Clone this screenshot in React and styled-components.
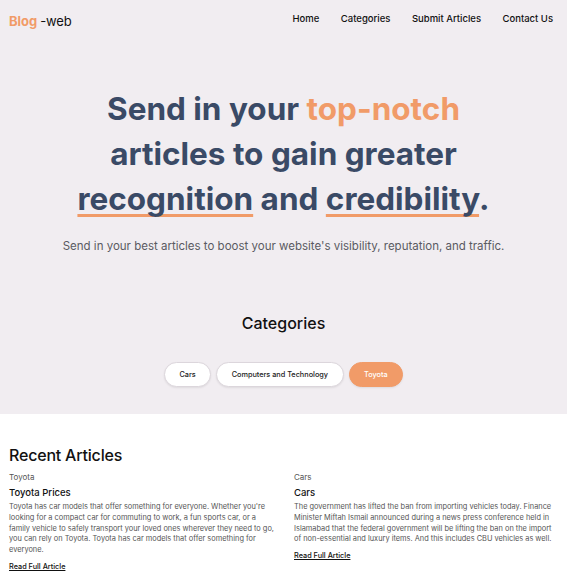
import styled, { createGlobalStyle } from 'styled-components';

const GlobalStyle = createGlobalStyle`
  html, body {
    margin: 0;
    padding: 0;
    background: #ffffff;
  }
  body {
    font-family: Inter, "Open Sans", sans-serif;
    color: #111;
  }
  * { box-sizing: border-box; }
`;

const orange = '#f19b68';

const Top = styled.div`
  background: #f1edf1;
  padding-bottom: 27px;
`;

const Header = styled.header`
  height: 38px;
  display: flex;
  align-items: center;
  justify-content: space-between;
  padding: 0 14px 0 9px;
`;

const Logo = styled.div`
  font-size: 13px;
  letter-spacing: -0.2px;
  margin-top: 4px;
  span { color: ${orange}; font-weight: 700; margin-right: 3px; letter-spacing: 0; }
`;

const Nav = styled.nav`
  display: flex;
  gap: 21.5px;
  margin-top: -2px;
`;

const NavLink = styled.a`
  font-size: 9.5px;
  font-weight: 500;
  color: #111;
  text-decoration: none;
`;

const Hero = styled.section`
  text-align: center;
  padding-top: 48px;
`;

const Title = styled.h1`
  margin: 0;
  font-size: 31.5px;
  line-height: 45px;
  font-weight: 700;
  color: #3a4a66;
`;

const Accent = styled.span`
  color: ${orange};
`;

const Marked = styled.span`
  text-decoration: underline;
  text-decoration-color: ${orange};
  text-decoration-thickness: 3px;
  text-underline-offset: 4px;
  text-decoration-skip-ink: none;
`;

const Lead = styled.p`
  margin: 18px 0 0;
  font-size: 11.5px;
  color: #5a5a62;
`;

const CatSection = styled.section`
  margin-top: 60px;
  text-align: center;
`;

const CatHeading = styled.h2`
  margin: 0;
  font-size: 16px;
  font-weight: 500;
  color: #111;
`;

const Pills = styled.div`
  display: flex;
  justify-content: center;
  gap: 5px;
  margin-top: 29px;
`;

const Pill = styled.button`
  height: 25px;
  padding: 0 14.5px;
  border-radius: 13px;
  border: 1px solid ${p => (p.$active ? orange : '#dcd6dc')};
  background: ${p => (p.$active ? orange : '#ffffff')};
  color: ${p => (p.$active ? '#ffffff' : '#222')};
  font-family: inherit;
  font-size: 7.3px;
  font-weight: 500;
  box-shadow: 0 1px 2px rgba(0, 0, 0, 0.08);
`;

const Articles = styled.section`
  padding: 31px 9px 0;
`;

const ArticlesHeading = styled.h2`
  margin: 0;
  font-size: 16px;
  letter-spacing: -0.2px;
  font-weight: 500;
  color: #111;
`;

const Grid = styled.div`
  display: grid;
  grid-template-columns: 270px 1fr;
  column-gap: 15px;
  margin-top: 7px;
`;

const Card = styled.article``;

const Tag = styled.div`
  font-size: 8px;
  color: #555;
`;

const CardTitle = styled.h3`
  margin: 5px 0 0;
  font-size: 9.5px;
  font-weight: 500;
  color: #111;
`;

const Body = styled.p`
  margin: 4px 0 0;
  font-size: 7.4px;
  line-height: 10.8px;
  color: #555;
`;

const ReadMore = styled.a`
  display: block;
  width: fit-content;
  margin-top: 6px;
  font-size: 7.3px;
  font-weight: 500;
  color: #111;
  text-decoration: underline;
`;

const articles = [
  {
    tag: 'Toyota',
    title: 'Toyota Prices',
    body:
      "Toyota has car models that offer something for everyone. Whether you're looking for a compact car for commuting to work, a fun sports car, or a family vehicle to safely transport your loved ones wherever they need to go, you can rely on Toyota. Toyota has car models that offer something for everyone.",
  },
  {
    tag: 'Cars',
    title: 'Cars',
    body:
      'The government has lifted the ban from importing vehicles today. Finance Minister Miftah Ismail announced during a news press conference held in Islamabad that the federal government will be lifting the ban on the import of non-essential and luxury items. And this includes CBU vehicles as well.',
  },
];

export default function App() {
  return (
    <>
      <GlobalStyle />
      <Top>
        <Header>
          <Logo><span>Blog</span>-web</Logo>
          <Nav>
            <NavLink>Home</NavLink>
            <NavLink>Categories</NavLink>
            <NavLink>Submit Articles</NavLink>
            <NavLink>Contact Us</NavLink>
          </Nav>
        </Header>
        <Hero>
          <Title>
            Send in your <Accent>top-notch</Accent>
            <br />
            articles to gain greater
            <br />
            <Marked>recognition</Marked> and <Marked>credibility</Marked>.
          </Title>
          <Lead>Send in your best articles to boost your website's visibility, reputation, and traffic.</Lead>
        </Hero>
        <CatSection>
          <CatHeading>Categories</CatHeading>
          <Pills>
            <Pill>Cars</Pill>
            <Pill>Computers and Technology</Pill>
            <Pill $active>Toyota</Pill>
          </Pills>
        </CatSection>
      </Top>
      <Articles>
        <ArticlesHeading>Recent Articles</ArticlesHeading>
        <Grid>
          {articles.map(a => (
            <Card key={a.title}>
              <Tag>{a.tag}</Tag>
              <CardTitle>{a.title}</CardTitle>
              <Body>{a.body}</Body>
              <ReadMore>Read Full Article</ReadMore>
            </Card>
          ))}
        </Grid>
      </Articles>
    </>
  );
}
